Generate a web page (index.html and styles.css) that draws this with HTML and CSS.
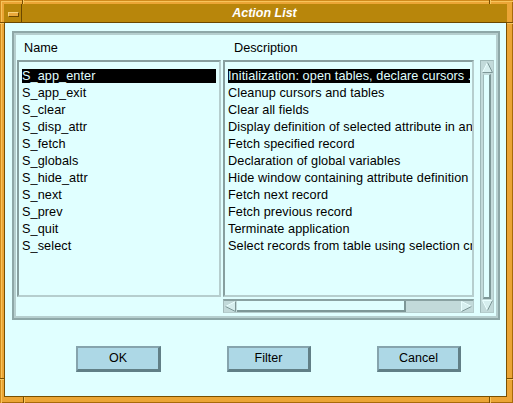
FILE: index.html
```html
<!DOCTYPE html>
<html>
<head>
<meta charset="utf-8">
<link rel="stylesheet" href="styles.css">
</head>
<body>
<div class="window">
  <div class="titlebar">
    <div class="menubtn"><span class="menubar"></span></div>
    <div class="title">Action List</div>
  </div>
  <div class="content">
    <div class="group">
      <div class="group-inner">
        <div class="hdr hdr-name">Name</div>
        <div class="hdr hdr-desc">Description</div>
        <div class="list list-names">
          <div class="item sel">S_app_enter</div>
          <div class="item">S_app_exit</div>
          <div class="item">S_clear</div>
          <div class="item">S_disp_attr</div>
          <div class="item">S_fetch</div>
          <div class="item">S_globals</div>
          <div class="item">S_hide_attr</div>
          <div class="item">S_next</div>
          <div class="item">S_prev</div>
          <div class="item">S_quit</div>
          <div class="item">S_select</div>
        </div>
        <div class="list list-desc">
          <div class="item sel">Initialization: open tables, declare cursors ...</div>
          <div class="item">Cleanup cursors and tables</div>
          <div class="item">Clear all fields</div>
          <div class="item">Display definition of selected attribute in an attribute window</div>
          <div class="item">Fetch specified record</div>
          <div class="item">Declaration of global variables</div>
          <div class="item">Hide window containing attribute definition</div>
          <div class="item">Fetch next record</div>
          <div class="item">Fetch previous record</div>
          <div class="item">Terminate application</div>
          <div class="item">Select records from table using selection criteria</div>
        </div>
        <div class="vscroll">
          <svg class="arrow" width="11" height="11" viewBox="0 0 11 11"><polygon points="5.5,0.5 0.5,10.5 10.5,10.5" fill="#d6eeee"/><polyline points="0.5,10.5 5.5,0.5" fill="none" stroke="#eaffff"/><polyline points="5.5,0.5 10.5,10.5 0.5,10.5" fill="none" stroke="#7d9797"/></svg>
          <div class="vthumb"></div>
          <svg class="arrow" width="11" height="11" viewBox="0 0 11 11"><polygon points="0.5,0.5 10.5,0.5 5.5,10.5" fill="#d6eeee"/><polyline points="5.5,10.5 0.5,0.5 10.5,0.5" fill="none" stroke="#eaffff"/><polyline points="10.5,0.5 5.5,10.5" fill="none" stroke="#7d9797"/></svg>
        </div>
        <div class="hscroll">
          <svg class="arrow" width="11" height="11" viewBox="0 0 11 11"><polygon points="0.5,5.5 10.5,0.5 10.5,10.5" fill="#d6eeee"/><polyline points="0.5,5.5 10.5,0.5" fill="none" stroke="#eaffff"/><polyline points="10.5,0.5 10.5,10.5 0.5,5.5" fill="none" stroke="#7d9797"/></svg>
          <div class="hthumb"></div>
          <div class="htrough"></div>
          <svg class="arrow" width="11" height="11" viewBox="0 0 11 11"><polygon points="0.5,0.5 10.5,5.5 0.5,10.5" fill="#d6eeee"/><polyline points="0.5,10.5 0.5,0.5 10.5,5.5" fill="none" stroke="#eaffff"/><polyline points="10.5,5.5 0.5,10.5" fill="none" stroke="#7d9797"/></svg>
        </div>
      </div>
    </div>
    <div class="buttons">
      <div class="btn btn-ok">OK</div>
      <div class="btn">Filter</div>
      <div class="btn">Cancel</div>
    </div>
  </div>
  <span class="notch nv n-tl"></span>
  <span class="notch nv n-tr"></span>
  <span class="notch nv n-bl"></span>
  <span class="notch nv n-br"></span>
  <span class="notch nh n-lt"></span>
  <span class="notch nh n-rt"></span>
  <span class="notch nh n-lb"></span>
  <span class="notch nh n-rb"></span>
</div>
</body>
</html>
```
FILE: styles.css
```css
html, body {
  margin: 0;
  padding: 0;
  background: #e0a030;
}
.window {
  position: relative;
  box-sizing: border-box;
  width: 513px;
  height: 403px;
  padding: 4px 6px 6px 4px;
  background: #eba536;
  box-shadow: inset 1px 1px 0 #d08a1c, inset 2px 2px 0 #f7c45a, inset -1px -1px 0 #a86a0a;
  display: flex;
  flex-direction: column;
  font-family: "Liberation Sans", Arial, sans-serif;
  color: #000;
}
.titlebar {
  height: 18px;
  background: #b8860b;
  border-bottom: 1px solid #6b4800;
  display: flex;
}
.menubtn {
  width: 18px;
  height: 18px;
  border-right: 1px solid #6b4800;
  box-sizing: border-box;
  display: flex;
  align-items: center;
  justify-content: center;
}
.menubar {
  display: block;
  width: 9px;
  height: 3px;
  margin-top: 2px;
  margin-left: 2px;
  background: #eaa93c;
  border-top: 1px solid #f8d27a;
  border-left: 1px solid #f8d27a;
  border-right: 1px solid #6b4800;
  border-bottom: 1px solid #6b4800;
}
.title {
  flex: 1;
  text-align: center;
  color: #ffffff;
  font-weight: bold;
  font-style: italic;
  font-size: 12.5px;
  line-height: 18px;
}
.content {
  flex: 1;
  background: #e0ffff;
  border-left: 1px solid #7a5000;
  border-right: 1px solid #7a5000;
  border-bottom: 1px solid #7a5000;
  display: flex;
  flex-direction: column;
}
.group {
  margin: 8px 6px 0 7px;
  border: 2px solid #8ea8a8;
}
.group-inner {
  border: 2px solid #b6cfcf;
  padding: 0 2px 3px 1px;
  display: grid;
  grid-template-columns: 204px 251px 18px;
  grid-template-rows: 25px 237px 16px;
  column-gap: 2px;
}
.hdr {
  font-size: 12.7px;
  line-height: 17px;
  padding-top: 5px;
}
.hdr-name { grid-column: 1; grid-row: 1; padding-left: 7px; }
.hdr-desc { grid-column: 2; grid-row: 1; padding-left: 11px; }
.list {
  grid-row: 2;
  box-sizing: border-box;
  height: 237px;
  border: 2px solid;
  border-color: #879f9f #b6cece #b6cece #879f9f;
  padding: 7px 3px 0 3px;
  overflow: hidden;
  font-size: 12.7px;
  letter-spacing: 0.08px;
}
.list-names { grid-column: 1; }
.list-desc { grid-column: 2; padding-right: 2px; }
.item {
  height: 14px;
  line-height: 14px;
  margin-bottom: 3px;
  white-space: nowrap;
}
.item.sel {
  background: #000;
  color: #e0ffff;
}
.vscroll {
  grid-column: 3;
  grid-row: 2 / span 2;
  justify-self: end;
  box-sizing: border-box;
  width: 14px;
  height: 253px;
  background: #c2dada;
  border: 1px solid;
  border-color: #9fb9b9 #b4cccc #b4cccc #9fb9b9;
  display: flex;
  flex-direction: column;
  align-items: center;
  padding: 1px 0;
}
.vscroll .arrow { flex: none; }
.vthumb {
  flex: 1;
  width: 8px;
  margin: 1px 0;
  background: #e0ffff;
  border-left: 1px solid #9fb9b9;
  border-top: 1px solid #c2dada;
  border-right: 2px solid #7d9797;
  border-bottom: 2px solid #7d9797;
  box-sizing: border-box;
}
.hscroll {
  grid-column: 2;
  grid-row: 3;
  margin-top: 2px;
  box-sizing: border-box;
  height: 14px;
  background: #c2dada;
  border-style: solid;
  border-width: 2px 1px 1px 1px;
  border-color: #8aa2a2 #b4cccc #b4cccc #a4bcbc;
  display: flex;
  align-items: center;
  padding: 0 1px;
}
.hscroll .arrow { flex: none; }
.hthumb {
  width: 169px;
  height: 11px;
  margin-left: 1px;
  box-sizing: border-box;
  background: #e0ffff;
  border-right: 2px solid #7d9797;
  border-bottom: 2px solid #7d9797;
}
.htrough { flex: 1; }
.buttons {
  margin-top: 26px;
  padding-left: 71px;
  display: flex;
  gap: 66px;
}
.btn {
  box-sizing: border-box;
  width: 84px;
  height: 26px;
  background: #add8e6;
  border-style: solid;
  border-width: 2px 3px 3px 2px;
  border-color: #86a4ad #617f86 #617f86 #86a4ad;
  text-align: center;
  font-size: 12.5px;
  line-height: 21px;
}
.btn-ok { width: 85px; }
.notch {
  position: absolute;
  background: #7a4e00;
}
.nv { width: 1px; box-shadow: 1px 0 0 #f8c860; }
.nh { height: 1px; box-shadow: 0 1px 0 #f8c860; }
.n-tl { left: 22px; top: 0; height: 4px; }
.n-tr { left: 489px; top: 0; height: 4px; }
.n-bl { left: 23px; top: 397px; height: 6px; }
.n-br { left: 489px; top: 397px; height: 6px; }
.n-lt { left: 0; top: 22px; width: 4px; }
.n-rt { left: 507px; top: 22px; width: 6px; }
.n-lb { left: 0; top: 378px; width: 4px; }
.n-rb { left: 507px; top: 378px; width: 6px; }
```
